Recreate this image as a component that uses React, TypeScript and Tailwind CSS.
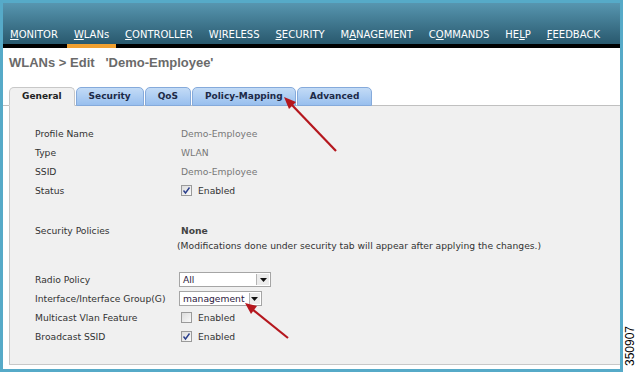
import React from 'react';

const navItems = [
  { pre: '', key: 'M', post: 'ONITOR' },
  { pre: '', key: 'W', post: 'LANs', active: true },
  { pre: '', key: 'C', post: 'ONTROLLER' },
  { pre: 'W', key: 'I', post: 'RELESS' },
  { pre: '', key: 'S', post: 'ECURITY' },
  { pre: 'M', key: 'A', post: 'NAGEMENT' },
  { pre: 'C', key: 'O', post: 'MMANDS' },
  { pre: 'HE', key: 'L', post: 'P' },
  { pre: '', key: 'F', post: 'EEDBACK' },
];

const tabs = ['General', 'Security', 'QoS', 'Policy-Mapping', 'Advanced'];

function Checkbox({ checked }: { checked?: boolean }) {
  return (
    <span className="inline-flex w-[11px] h-[11px] border border-[#9a9a9a] bg-gradient-to-br from-[#dcdcdc] to-[#fafafa] items-center justify-center">
      {checked && (
        <svg width="9" height="9" viewBox="0 0 9 9">
          <path d="M1.5 4.5 L3.5 7 L7.5 1.5" fill="none" stroke="#2b3f8c" strokeWidth="1.4" />
        </svg>
      )}
    </span>
  );
}

function Select({ value, width }: { value: string; width: string }) {
  return (
    <div className={`flex h-[15px] border border-[#a5a5a5] bg-white ${width}`}>
      <span className="flex-1 px-[3px] leading-[13px] text-[#2d2040]">{value}</span>
      <span className="w-[13px] border-l border-[#b5b5b5] bg-[#ececec] flex items-center justify-center m-[1px]">
        <svg width="7" height="4" viewBox="0 0 7 4">
          <path d="M0 0 H7 L3.5 4 Z" fill="#111" />
        </svg>
      </span>
    </div>
  );
}

function Row({ label, children, className = '' }: { label: string; children: React.ReactNode; className?: string }) {
  return (
    <div className={`flex items-center ${className}`}>
      <div className="w-[146px] text-[#333]">{label}</div>
      <div className="flex items-center">{children}</div>
    </div>
  );
}

export default function App() {
  return (
    <div className="relative w-[636px] h-[372px] bg-white overflow-hidden flex" style={{ fontFamily: '"DejaVu Sans", Verdana, sans-serif' }}>
      <div className="w-[623px] h-full border-[3px] border-[#56aac8] flex flex-col">
        {/* top navigation */}
        <div className="h-[45px] bg-gradient-to-b from-[#5796b0] to-[#29596e] border-b-4 border-black flex items-end">
          {navItems.map((n) => (
            <div
              key={n.key + n.post}
              className={`-mb-1 px-[7px] pb-[3px] mr-[2px] border-b-4 text-[10px] leading-[12px] text-white ${n.active ? 'border-[#f0a030]' : 'border-transparent'}`}
            >
              {n.pre}
              <span className="underline">{n.key}</span>
              {n.post}
            </div>
          ))}
        </div>

        {/* page title */}
        <div className="h-[39px] pl-[6px] pt-[5px] text-[13px] font-bold text-[#6a6a6a]" style={{ fontFamily: '"Liberation Sans", Arial, sans-serif' }}>
          WLANs &gt; Edit&nbsp;&nbsp; 'Demo-Employee'
        </div>

        {/* tabs */}
        <div className="flex items-end pl-[6px] h-[19px] border-b border-[#c0c0c0]">
          {tabs.map((t, i) => (
            <div
              key={t}
              className={`h-[19px] -mb-px mr-[1px] px-[12px] rounded-t-[5px] border text-[9px] font-bold flex items-center ${
                i === 0
                  ? 'bg-[#f0f0f0] border-[#c8c8c8] border-b-[#f0f0f0] text-[#222]'
                  : 'bg-gradient-to-b from-[#c3dbf6] to-[#98bfee] border-[#85aadb] text-[#1d2a48]'
              }`}
            >
              {t}
            </div>
          ))}
        </div>

        {/* content panel */}
        <div className="ml-[6px] flex-1 bg-[#f0f0f0] border-l border-b border-[#c8c8c8] mb-[4px] pl-[25px] pt-[18px] text-[9.2px] text-[#333]">
          <Row label="Profile Name" className="h-[19px]"><span className="text-[#777]">Demo-Employee</span></Row>
          <Row label="Type" className="h-[19px]"><span className="text-[#777]">WLAN</span></Row>
          <Row label="SSID" className="h-[19px]"><span className="text-[#777]">Demo-Employee</span></Row>
          <Row label="Status" className="h-[19px]">
            <Checkbox checked />
            <span className="ml-[6px]">Enabled</span>
          </Row>
          <div className="h-[21px]" />
          <Row label="Security Policies" className="h-[19px]"><span className="font-bold text-[#444]">None</span></Row>
          <div className="h-[12px] -ml-[4px] pl-[146px] flex items-center whitespace-nowrap">(Modifications done under security tab will appear after applying the changes.)</div>
          <div className="h-[18px]" />
          <Row label="Radio Policy" className="h-[19px]"><div className="-ml-[2px]"><Select value="All" width="w-[92px]" /></div></Row>
          <Row label="Interface/Interface Group(G)" className="h-[19px]"><div className="-ml-[2px]"><Select value="management" width="w-[83px]" /></div></Row>
          <Row label="Multicast Vlan Feature" className="h-[19px]">
            <Checkbox />
            <span className="ml-[6px]">Enabled</span>
          </Row>
          <Row label="Broadcast SSID" className="h-[19px]">
            <Checkbox checked />
            <span className="ml-[6px]">Enabled</span>
          </Row>
        </div>
      </div>

      {/* figure number */}
      <div className="flex-1 flex flex-col justify-end items-center pb-[6px]">
        <span
          className="[writing-mode:vertical-rl] rotate-180 text-[12px] leading-[12px] text-black"
          style={{ fontFamily: '"Liberation Sans", Arial, sans-serif' }}
        >
          350907
        </span>
      </div>

      {/* red annotation arrows */}
      <svg className="absolute inset-0 pointer-events-none" width="636" height="372">
        <line x1="336" y1="151" x2="291" y2="104" stroke="#b5171e" strokeWidth="2.2" />
        <path d="M284 97 L296 102 L289 109 Z" fill="#b5171e" />
        <line x1="288" y1="338" x2="252" y2="309" stroke="#b5171e" strokeWidth="2.2" />
        <path d="M245 303 L257 306 L251 314 Z" fill="#b5171e" />
      </svg>
    </div>
  );
}
